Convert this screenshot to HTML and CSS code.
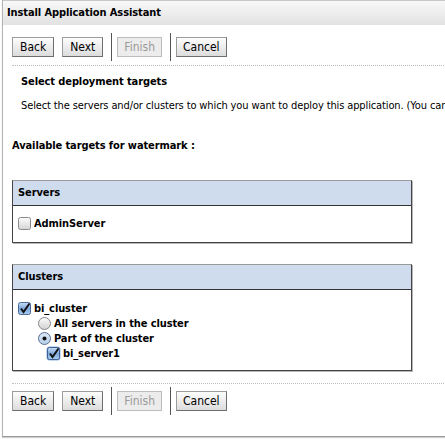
FILE: index.html
```
<!DOCTYPE html>
<html>
<head>
<meta charset="utf-8">
<link rel="stylesheet" href="styles.css">
</head>
<body>
<div class="panel">
  <div class="titlebar">Install Application Assistant</div>
  <div class="content">
    <div class="btnrow top">
      <button class="btn">Back</button>
      <button class="btn">Next</button>
      <span class="sep"></span>
      <button class="btn disabled">Finish</button>
      <span class="sep"></span>
      <button class="btn cancel">Cancel</button>
    </div>
    <div class="dotted"></div>
    <div class="intro">
      <div class="heading">Select deployment targets</div>
      <div class="desc">Select the servers and/or clusters to which you want to deploy this application. (You can reselect the deployment targets later.)</div>
    </div>
    <div class="avail">Available targets for watermark :</div>

    <div class="box servers">
      <div class="boxhead">Servers</div>
      <div class="boxbody">
        <div class="item lvl0">
          <svg class="cb" width="13" height="13" viewBox="0 0 13 13"><defs><linearGradient id="gu" x1="0" y1="0" x2="0" y2="1"><stop offset="0" stop-color="#fdfdfd"/><stop offset="1" stop-color="#d4d4d4"/></linearGradient></defs><rect x="0.5" y="0.5" width="12" height="12" rx="2" fill="url(#gu)" stroke="#8a8a8a"/></svg>
          <span>AdminServer</span>
        </div>
      </div>
    </div>

    <div class="box clusters">
      <div class="boxhead">Clusters</div>
      <div class="boxbody">
        <div class="item lvl0">
          <svg class="cb" width="13" height="13" viewBox="0 0 13 13"><defs><linearGradient id="gb" x1="0" y1="0" x2="0" y2="1"><stop offset="0" stop-color="#c9def6"/><stop offset="0.5" stop-color="#7ea9dc"/><stop offset="1" stop-color="#a9cbf0"/></linearGradient></defs><rect x="0.5" y="0.5" width="12" height="12" rx="2" fill="url(#gb)" stroke="#4a6a98"/><path d="M3 6.5 L5.5 10 L11.5 1.5" fill="none" stroke="#111" stroke-width="2"/></svg>
          <span>bi_cluster</span>
        </div>
        <div class="item lvl1">
          <svg class="rb" width="13" height="13" viewBox="0 0 13 13"><defs><linearGradient id="gr" x1="0" y1="0" x2="0" y2="1"><stop offset="0" stop-color="#fdfdfd"/><stop offset="1" stop-color="#d0d0d0"/></linearGradient></defs><circle cx="6.5" cy="6.5" r="6" fill="url(#gr)" stroke="#888"/></svg>
          <span>All servers in the cluster</span>
        </div>
        <div class="item lvl1">
          <svg class="rb" width="13" height="13" viewBox="0 0 13 13"><defs><linearGradient id="gs" x1="0" y1="0" x2="0" y2="1"><stop offset="0" stop-color="#dce8f7"/><stop offset="1" stop-color="#b5cdea"/></linearGradient></defs><circle cx="6.5" cy="6.5" r="6" fill="url(#gs)" stroke="#5a6f8e"/><circle cx="6.5" cy="6.5" r="2" fill="#111"/></svg>
          <span>Part of the cluster</span>
        </div>
        <div class="item lvl2">
          <svg class="cb focus" width="15" height="15" viewBox="0 0 15 15"><rect x="0.5" y="0.5" width="14" height="14" rx="3" fill="#8fb3e2"/><rect x="1.5" y="1.5" width="12" height="12" rx="2" fill="url(#gb)" stroke="#3f5f90"/><path d="M4 7.5 L6.5 11 L12.5 2.5" fill="none" stroke="#111" stroke-width="2"/></svg>
          <span>bi_server1</span>
        </div>
      </div>
    </div>

    <div class="dotted bottomline"></div>
    <div class="btnrow">
      <button class="btn">Back</button>
      <button class="btn">Next</button>
      <span class="sep"></span>
      <button class="btn disabled">Finish</button>
      <span class="sep"></span>
      <button class="btn cancel">Cancel</button>
    </div>
  </div>
</div>
</body>
</html>
```
FILE: styles.css
```
html, body {
  margin: 0;
  padding: 0;
  background: #fff;
  overflow: hidden;
  width: 445px;
  height: 439px;
}
body {
  font-family: "DejaVu Sans Condensed", "DejaVu Sans", sans-serif;
  font-size: 11px;
  color: #000;
  letter-spacing: -0.1px;
}
.panel {
  margin-left: 2px;
  width: 460px;
  height: 437px;
  border-left: 1px solid #b4b4b4;
  border-bottom: 1px solid #9a9a9a;
  box-shadow: 0 1px 1px #cfcfcf;
  box-sizing: border-box;
  overflow: hidden;
}
.titlebar {
  height: 25px;
  box-sizing: border-box;
  border-top: 1px solid #c8c8c8;
  background: linear-gradient(#f8f8f8, #e2e2e2);
  font-weight: bold;
  line-height: 24px;
  padding-left: 4px;
  white-space: nowrap;
}
.content {
  padding-left: 9px;
}
.btnrow {
  display: flex;
  align-items: center;
  height: 28px;
}
.btnrow.top {
  margin-top: 8px;
}
.btn {
  font-family: "DejaVu Sans Condensed", "DejaVu Sans", sans-serif;
  font-size: 12px;
  letter-spacing: 0;
  height: 20px;
  padding: 0 7px;
  margin: 0 8px 0 0;
  background: linear-gradient(#fdfdfd, #dcdcdc);
  border: 1px solid #9c9c9c;
  border-right-color: #6e6e6e;
  border-bottom-color: #6e6e6e;
  border-radius: 0;
  color: #000;
  line-height: 18px;
}
.btn.disabled {
  background: #ececec;
  color: #9a9a9a;
  border-color: #bcbcbc;
  padding: 0 6px;
}
.btn.cancel {
  padding: 0 6px;
}
.sep {
  display: block;
  width: 1px;
  height: 28px;
  background: #555;
  margin: 0 5px 0 0;
}
.dotted {
  border-top: 1px dotted #bdbdbd;
  margin-top: 4px;
  height: 0;
}
.intro {
  padding-left: 9px;
}
.heading {
  font-weight: bold;
  margin-top: 9px;
  line-height: 14px;
}
.desc {
  margin-top: 10px;
  line-height: 14px;
  white-space: nowrap;
  letter-spacing: -0.12px;
}
.avail {
  font-weight: bold;
  margin-top: 26px;
  line-height: 14px;
}
.box {
  width: 400px;
  box-sizing: border-box;
  border: 1px solid #444;
  border-top-color: #9a9a9a;
  box-shadow: 1px 1px 0 #b8b8b8;
}
.servers {
  margin-top: 27px;
  height: 63px;
}
.clusters {
  margin-top: 21px;
  height: 107px;
}
.boxhead {
  height: 25px;
  box-sizing: border-box;
  background: #cfdcee;
  border-bottom: 1px solid #333;
  font-weight: bold;
  line-height: 24px;
  padding-left: 5px;
}
.servers .boxbody {
  padding-top: 10px;
}
.clusters .boxbody {
  padding-top: 11px;
}
.item {
  display: flex;
  align-items: center;
  height: 15px;
  font-weight: bold;
  white-space: nowrap;
}
.item svg {
  flex: none;
  margin-right: 3px;
}
.lvl0 { padding-left: 5px; }
.lvl1 { padding-left: 25px; }
.lvl2 { padding-left: 34px; }
.lvl2 svg { margin-left: -1px; margin-right: 2px; }
.bottomline {
  margin-top: 12px;
}
.btnrow:last-child {
  margin-top: 3px;
}
```
